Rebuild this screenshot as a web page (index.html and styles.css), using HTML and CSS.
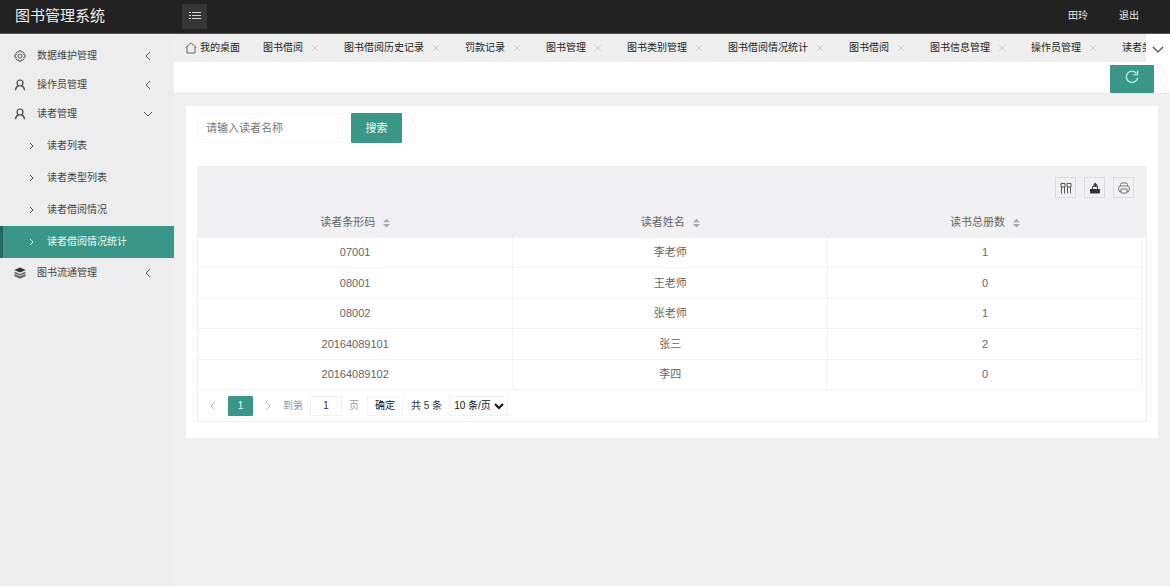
FILE: index.html
```html
<!DOCTYPE html>
<html lang="zh-CN">
<head>
<meta charset="utf-8">
<title>图书管理系统</title>
<link rel="stylesheet" href="styles.css">
</head>
<body>
<header class="topbar">
  <h1 class="brand">图书管理系统</h1>
  <button class="menu-toggle" type="button" aria-label="菜单">
    <svg width="14" height="10" viewBox="0 0 14 10" stroke="#d8d8d8" stroke-width="1"><path d="M4 1.5h9M4 4.5h9M4 7.5h9M1 1.5h2M1 4.5h2M1 7.5h2"/></svg>
  </button>
  <nav class="account"><a href="#">田玲</a><a href="#">退出</a></nav>
</header>
<div class="shell">
  <nav class="sidebar">
    <a class="item" href="#">
      <svg class="item-icon" viewBox="0 0 12 12" fill="none" stroke="#555"><circle cx="6" cy="6" r="2"/><path d="M5 .8h2l.4 1.4 1.3-.6 1.5 1.5-.6 1.3 1.5.5v2l-1.5.5.6 1.3-1.5 1.5-1.3-.6L7 11.2H5l-.4-1.5-1.3.6-1.5-1.5.6-1.3L.8 7V5l1.6-.5-.6-1.3 1.5-1.5 1.3.6z"/></svg>
      <span>数据维护管理</span>
      <svg class="item-arrow" viewBox="0 0 10 10" fill="none" stroke="#555"><path d="M7 1 3 5l4 4"/></svg>
    </a>
    <a class="item" href="#">
      <svg class="item-icon" viewBox="0 0 12 12" fill="none" stroke="#444" stroke-width="1.2"><circle cx="6" cy="4" r="3"/><path d="M1.500 11.200C1.700 8.800 3 7.200 4.800 6.600M7.200 6.600c1.800.6 3.100 2.200 3.300 4.600"/></svg>
      <span>操作员管理</span>
      <svg class="item-arrow" viewBox="0 0 10 10" fill="none" stroke="#555"><path d="M7 1 3 5l4 4"/></svg>
    </a>
    <a class="item" href="#">
      <svg class="item-icon" viewBox="0 0 12 12" fill="none" stroke="#444" stroke-width="1.2"><circle cx="6" cy="4" r="3"/><path d="M1.500 11.200C1.700 8.800 3 7.200 4.800 6.600M7.200 6.600c1.800.6 3.100 2.200 3.300 4.600"/></svg>
      <span>读者管理</span>
      <svg class="item-arrow" viewBox="0 0 10 10" fill="none" stroke="#555"><path d="m1 3 4 4 4-4"/></svg>
    </a>
    <div class="submenu">
      <a class="subitem" href="#"><svg viewBox="0 0 8 8" fill="none" stroke="currentColor"><path d="m2 1 3 3-3 3"/></svg>读者列表</a>
      <a class="subitem" href="#"><svg viewBox="0 0 8 8" fill="none" stroke="currentColor"><path d="m2 1 3 3-3 3"/></svg>读者类型列表</a>
      <a class="subitem" href="#"><svg viewBox="0 0 8 8" fill="none" stroke="currentColor"><path d="m2 1 3 3-3 3"/></svg>读者借阅情况</a>
      <a class="subitem active" href="#"><svg viewBox="0 0 8 8" fill="none" stroke="currentColor"><path d="m2 1 3 3-3 3"/></svg>读者借阅情况统计</a>
    </div>
    <a class="item" href="#">
      <svg class="item-icon" viewBox="0 0 12 12"><path fill="#333" d="M6 .5 11.700 3 6 5.600.3 3z"/><path fill="#666" d="M.5 4.200 6 6.700l5.500-2.500v5L6 11.700.5 9.200z"/><path fill="none" stroke="#eee" stroke-width=".7" d="M.5 4 6 6.500 11.500 4M.5 6.500 6 9l5.500-2.500"/></svg>
      <span>图书流通管理</span>
      <svg class="item-arrow" viewBox="0 0 10 10" fill="none" stroke="#555"><path d="M7 1 3 5l4 4"/></svg>
    </a>
  </nav>
  <div class="workspace">
    <div class="tabs">
      <div class="tablist">
        <a class="home" href="#"><svg width="12" height="12" viewBox="0 0 12 12" fill="none" stroke="#666"><path d="M.6 5.500 6 .9l5.400 4.600M2 4.500v6.500h8V4.500"/></svg>我的桌面</a>
        <div class="tab"><a href="#">图书借阅</a><button type="button" aria-label="关闭"><svg viewBox="0 0 6 6"><path d="m0 0 6 6M6 0 0 6"/></svg></button></div>
        <div class="tab"><a href="#">图书借阅历史记录</a><button type="button" aria-label="关闭"><svg viewBox="0 0 6 6"><path d="m0 0 6 6M6 0 0 6"/></svg></button></div>
        <div class="tab"><a href="#">罚款记录</a><button type="button" aria-label="关闭"><svg viewBox="0 0 6 6"><path d="m0 0 6 6M6 0 0 6"/></svg></button></div>
        <div class="tab"><a href="#">图书管理</a><button type="button" aria-label="关闭"><svg viewBox="0 0 6 6"><path d="m0 0 6 6M6 0 0 6"/></svg></button></div>
        <div class="tab"><a href="#">图书类别管理</a><button type="button" aria-label="关闭"><svg viewBox="0 0 6 6"><path d="m0 0 6 6M6 0 0 6"/></svg></button></div>
        <div class="tab"><a href="#">图书借阅情况统计</a><button type="button" aria-label="关闭"><svg viewBox="0 0 6 6"><path d="m0 0 6 6M6 0 0 6"/></svg></button></div>
        <div class="tab"><a href="#">图书借阅</a><button type="button" aria-label="关闭"><svg viewBox="0 0 6 6"><path d="m0 0 6 6M6 0 0 6"/></svg></button></div>
        <div class="tab"><a href="#">图书信息管理</a><button type="button" aria-label="关闭"><svg viewBox="0 0 6 6"><path d="m0 0 6 6M6 0 0 6"/></svg></button></div>
        <div class="tab"><a href="#">操作员管理</a><button type="button" aria-label="关闭"><svg viewBox="0 0 6 6"><path d="m0 0 6 6M6 0 0 6"/></svg></button></div>
        <div class="tab"><a href="#">读者类型</a></div>
      </div>
      <button class="tabs-more" type="button" aria-label="更多"><svg width="12" height="8" viewBox="0 0 12 8" fill="none" stroke="#444" stroke-width="1.200"><path d="m1 1 5 5 5-5"/></svg></button>
    </div>
    <div class="crumbs">
      <button class="refresh" type="button" aria-label="刷新"><svg width="14" height="14" viewBox="0 0 14 14" fill="none" stroke="#b4efe0" stroke-width="1.400"><path d="M11.300 3A5.700 5.700 0 1 0 12.700 7.600M12.600.5V4.600H8.500"/></svg></button>
    </div>
    <main class="card">
      <form class="search">
        <input type="text" placeholder="请输入读者名称" aria-label="读者名称">
        <button type="button">搜索</button>
      </form>
      <section class="grid">
        <div class="toolbar">
          <button type="button" aria-label="筛选列"><svg viewBox="0 0 12 12" fill="none" stroke="#555"><path d="M1 1.500h4v3.500H1zM7 1.500h4v3.500H7zM1.500 5v6.500M4.500 5v6.500M7.500 5v6.500M10.500 5v6.500"/></svg></button>
          <button type="button" aria-label="导出"><svg viewBox="0 0 12 12"><path fill="#333" d="M1 7h10v3.500q0 1-1 1H2q-1 0-1-1zM6 .5 9 3.500H7.500V5h-2V3.500H4z"/><path fill="none" stroke="#444" d="M3.500 7V4.500h5V7"/></svg></button>
          <button type="button" aria-label="打印"><svg viewBox="0 0 12 12" fill="none" stroke="#777"><path d="M2.500 4V2.500q0-1.500 1.500-1.500h4q1.500 0 1.500 1.500V4M3 9.500H2q-1.300 0-1.300-1.500V5.500Q.7 4 2 4h8q1.300 0 1.300 1.500V8q0 1.500-1.300 1.500H9M3 7h6v4H3z"/></svg></button>
        </div>
        <div class="table-wrap">
          <table>
            <thead><tr>
              <th scope="col">读者条形码<svg class="sort" viewBox="0 0 8 10"><path d="M4 0 8 4H0zM0 6h8l-4 4z"/></svg></th>
              <th scope="col">读者姓名<svg class="sort" viewBox="0 0 8 10"><path d="M4 0 8 4H0zM0 6h8l-4 4z"/></svg></th>
              <th scope="col">读书总册数<svg class="sort" viewBox="0 0 8 10"><path d="M4 0 8 4H0zM0 6h8l-4 4z"/></svg></th>
            </tr></thead>
            <tbody>
              <tr><td>07001</td><td>李老师</td><td>1</td></tr>
              <tr><td>08001</td><td>王老师</td><td>0</td></tr>
              <tr><td>08002</td><td>张老师</td><td>1</td></tr>
              <tr><td>20164089101</td><td>张三</td><td>2</td></tr>
              <tr><td>20164089102</td><td>李四</td><td>0</td></tr>
            </tbody>
          </table>
        </div>
        <div class="pager">
          <button class="step" type="button" aria-label="上一页"><svg viewBox="0 0 8 10"><path d="M6 1 2 5l4 4"/></svg></button>
          <button class="current" type="button">1</button>
          <button class="step" type="button" aria-label="下一页"><svg viewBox="0 0 8 10"><path d="m2 1 4 4-4 4"/></svg></button>
          <label class="muted" for="page">到第</label>
          <input id="page" type="text" value="1">
          <span class="muted">页</span>
          <button class="confirm" type="button">确定</button>
          <span>共 5 条</span>
          <select aria-label="每页条数"><option>10 条/页</option><option>20 条/页</option></select>
        </div>
      </section>
    </main>
  </div>
</div>
</body>
</html>
```
FILE: styles.css
```css
* { box-sizing: border-box; }
body {
  margin: 0;
  min-height: 100vh;
  display: flex;
  flex-direction: column;
  background: #f1f0f1;
  color: #333;
  font: 10px/14px "Liberation Sans", "Noto Sans CJK SC", sans-serif;
}
a { color: inherit; text-decoration: none; }
button, input, select { font: inherit; color: inherit; }
button { padding: 0; border: 0; background: none; display: flex; align-items: center; justify-content: center; }
svg { display: block; flex: none; }

.topbar { height: 34px; padding-bottom: 1px; display: flex; align-items: center; background: #232223; color: #eee; border-bottom: 1px solid #555; }
.brand { margin: 0; width: 182px; padding-left: 15px; font-size: 15px; font-weight: 400; line-height: 20px; }
.menu-toggle { width: 25px; height: 25px; background: #363636; }
.account { margin-left: auto; padding-right: 31px; display: flex; gap: 31px; }

.shell { flex: 1; display: flex; }
.sidebar { width: 174px; flex: none; padding-top: 7px; background: #eeedee; color: #444; }
.item { height: 29px; display: flex; align-items: center; padding: 0 21px 0 14px; }
.item-icon { width: 12px; height: 12px; margin-right: 11px; }
.item-arrow { width: 10px; height: 10px; margin-left: auto; }
.submenu { padding-top: 2px; }
.subitem { height: 32px; display: flex; align-items: center; gap: 11px; padding-left: 25px; border-left: 3px solid transparent; }
.subitem svg { width: 8px; height: 8px; }
.subitem.active { background: #3a9787; border-color: #23685c; color: #e8fffa; }

.workspace { flex: 1; min-width: 0; }
.tabs { height: 28px; display: flex; background: #efeff0; }
.tablist { flex: 1; min-width: 0; display: flex; align-items: center; overflow: hidden; white-space: nowrap; color: #222; }
.home { flex: none; display: flex; align-items: center; gap: 3px; margin-left: 11px; padding-right: 23px; }
.tab { flex: none; display: flex; align-items: center; gap: 9px; padding-right: 26px; }
.tab svg { width: 6px; height: 6px; stroke: #ccc; }
.tabs-more { width: 24px; padding-top: 3px; background: #fff; }
.crumbs { height: 32px; padding: 3px 16px 0 0; display: flex; justify-content: flex-end; background: #fff; border-bottom: 1px solid #e8e8e8; }
.refresh { width: 44px; height: 28px; padding-bottom: 5px; background: #3a9787; border-radius: 1px; }

.card { margin: 12px; padding: 7px 11px 16px; background: #fff; border-radius: 2px; font-size: 11px; color: #666; }
.search { display: flex; gap: 8px; margin-bottom: 23px; }
.search input { width: 146px; height: 30px; padding: 0 8px; border: 1px solid #f6f6f6; border-radius: 1px; background: #fff; }
.search input::placeholder { color: #777; opacity: 1; }
.search button { width: 51px; height: 30px; background: #3a9787; color: #e8fffa; border-radius: 1px; }

.grid { border: 1px solid #f0f0f0; }
.toolbar { height: 40px; padding: 1px 12px 0 0; display: flex; align-items: center; justify-content: flex-end; gap: 8px; background: #f1f0f2; }
.toolbar button { width: 21px; height: 21px; border: 1px solid #dcdcdc; }
.toolbar svg { width: 12px; height: 12px; }
.table-wrap { padding-right: 3px; background: linear-gradient(#f1f0f2 30px, #fff 30px); }
table { width: 100%; table-layout: fixed; height: 183px; border-collapse: collapse; text-align: center; }
th, td { padding: 0; border-bottom: 1px solid #f2f2f2; border-right: 1px solid #f2f2f2; line-height: 16px; }
th { height: 30px; background: #f1f0f2; border-right-color: #f1f0f2; font-weight: 400; }
.sort { display: inline-block; width: 7px; height: 10px; margin-left: 8px; vertical-align: middle; fill: #aaa; }
.pager { height: 31px; padding-left: 11px; display: flex; align-items: center; font-size: 10px; color: #333; }
.step { width: 8px; height: 20px; }
.step svg { width: 8px; height: 10px; fill: none; stroke: #bbb; }
.current { width: 25px; height: 20px; margin: 0 11px; background: #3a9787; color: #e8fffa; border-radius: 1px; }
.muted { color: #999; }
label.muted { margin: 0 7px 0 11px; }
.pager input { width: 32px; height: 20px; margin-right: 7px; padding: 0; text-align: center; border: 1px solid #f0f0f0; background: #fff; }
.confirm { width: 36px; height: 20px; margin: 0 8px; border: 1px solid #f3f3f3; color: #111; }
.pager select { height: 20px; margin-left: 7px; border: 1px solid #f0f0f0; background: #fff; color: #111; }
```
